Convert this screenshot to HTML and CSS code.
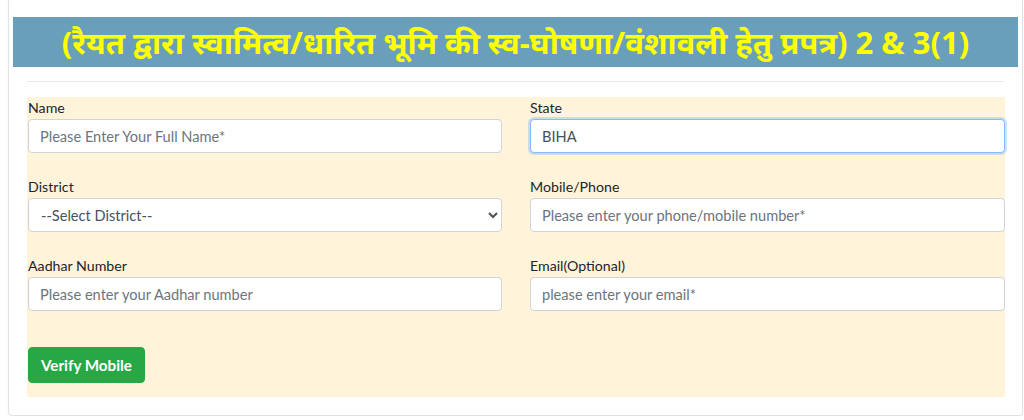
FILE: index.html
```html
<!DOCTYPE html>
<html lang="en">
<head>
    <meta charset="UTF-8">
    <meta name="viewport" content="width=device-width, initial-scale=1.0">
    <title>Self Declaration Form</title>
    <link rel="stylesheet" href="styles.css">
</head>
<body>

<div class="card">
    <h1 class="form-title">(रैयत द्वारा स्वामित्व/धारित भूमि की स्व-घोषणा/वंशावली हेतु प्रपत्र) 2 &amp; 3(1)</h1>

    <div class="card-body">
        <hr class="divider">

        <form class="form-panel">
            <div class="form-grid">
                <div class="form-group">
                    <label for="name">Name</label>
                    <input type="text" id="name" class="form-control" placeholder="Please Enter Your Full Name*">
                </div>
                <div class="form-group">
                    <label for="state">State</label>
                    <input type="text" id="state" class="form-control is-focused" value="BIHA">
                </div>
                <div class="form-group">
                    <label for="district">District</label>
                    <select id="district" class="form-control">
                        <option>--Select District--</option>
                    </select>
                </div>
                <div class="form-group">
                    <label for="phone">Mobile/Phone</label>
                    <input type="text" id="phone" class="form-control" placeholder="Please enter your phone/mobile number*">
                </div>
                <div class="form-group">
                    <label for="aadhar">Aadhar Number</label>
                    <input type="text" id="aadhar" class="form-control" placeholder="Please enter your Aadhar number">
                </div>
                <div class="form-group">
                    <label for="email">Email(Optional)</label>
                    <input type="text" id="email" class="form-control" placeholder="please enter your email*">
                </div>
            </div>

            <button type="button" class="btn-verify">Verify Mobile</button>
        </form>
    </div>
</div>

</body>
</html>
```

FILE: styles.css
```css
body {
    font-family: Lato, "Open Sans", Arial, sans-serif;
    font-size: 14px;
    color: #212529;
    margin: 0;
    padding: 0;
    background-color: #fff;
}

.card {
    margin: -3px 1px 0 8px;
    padding: 0 4px 18px 4px;
    border: 1px solid #e2e2e2;
    border-radius: 4px;
    background-color: #fff;
    box-shadow: 0 1px 2px rgba(0, 0, 0, 0.05);
}

.form-title {
    margin: 19px 0 0 0;
    height: 50px;
    background-color: #6a9fbb;
    color: #ffff00;
    font-family: "Noto Sans", "Noto Sans Devanagari", sans-serif;
    font-size: 31px;
    font-weight: bold;
    line-height: 50px;
    text-align: center;
    white-space: nowrap;
    overflow: hidden;
}

.card-body {
    padding: 0 13px 0 14px;
}

.divider {
    margin: 14px 1px 15px 0;
    border: 0;
    border-top: 1px solid #e8e8e8;
}

.form-panel {
    background-color: #fff4da;
    padding: 0 0 14px 1px;
}

.form-grid {
    display: grid;
    grid-template-columns: 474px 1fr;
    column-gap: 28px;
}

.form-group {
    margin-bottom: 23px;
}

.form-group label {
    display: block;
    font-size: 14.2px;
    line-height: 21px;
    margin-bottom: 1px;
}

.form-control {
    display: block;
    width: 100%;
    height: 34px;
    box-sizing: border-box;
    padding: 0 11px;
    font-family: inherit;
    font-size: 14.6px;
    color: #495057;
    background-color: #fff;
    border: 1px solid #ced4da;
    border-radius: 4px;
}

.form-control::placeholder {
    color: #6c757d;
}

.is-focused {
    border-color: #80bdff;
    box-shadow: 0 0 0 2px rgba(0, 123, 255, 0.2);
}

select.form-control {
    padding: 0 8px;
}

.btn-verify {
    margin-top: 13px;
    height: 36px;
    padding: 0 12px;
    font-family: inherit;
    font-size: 15.2px;
    font-weight: bold;
    color: #fff;
    background-color: #28a745;
    border: 1px solid #28a745;
    border-radius: 4px;
    cursor: pointer;
}
```
